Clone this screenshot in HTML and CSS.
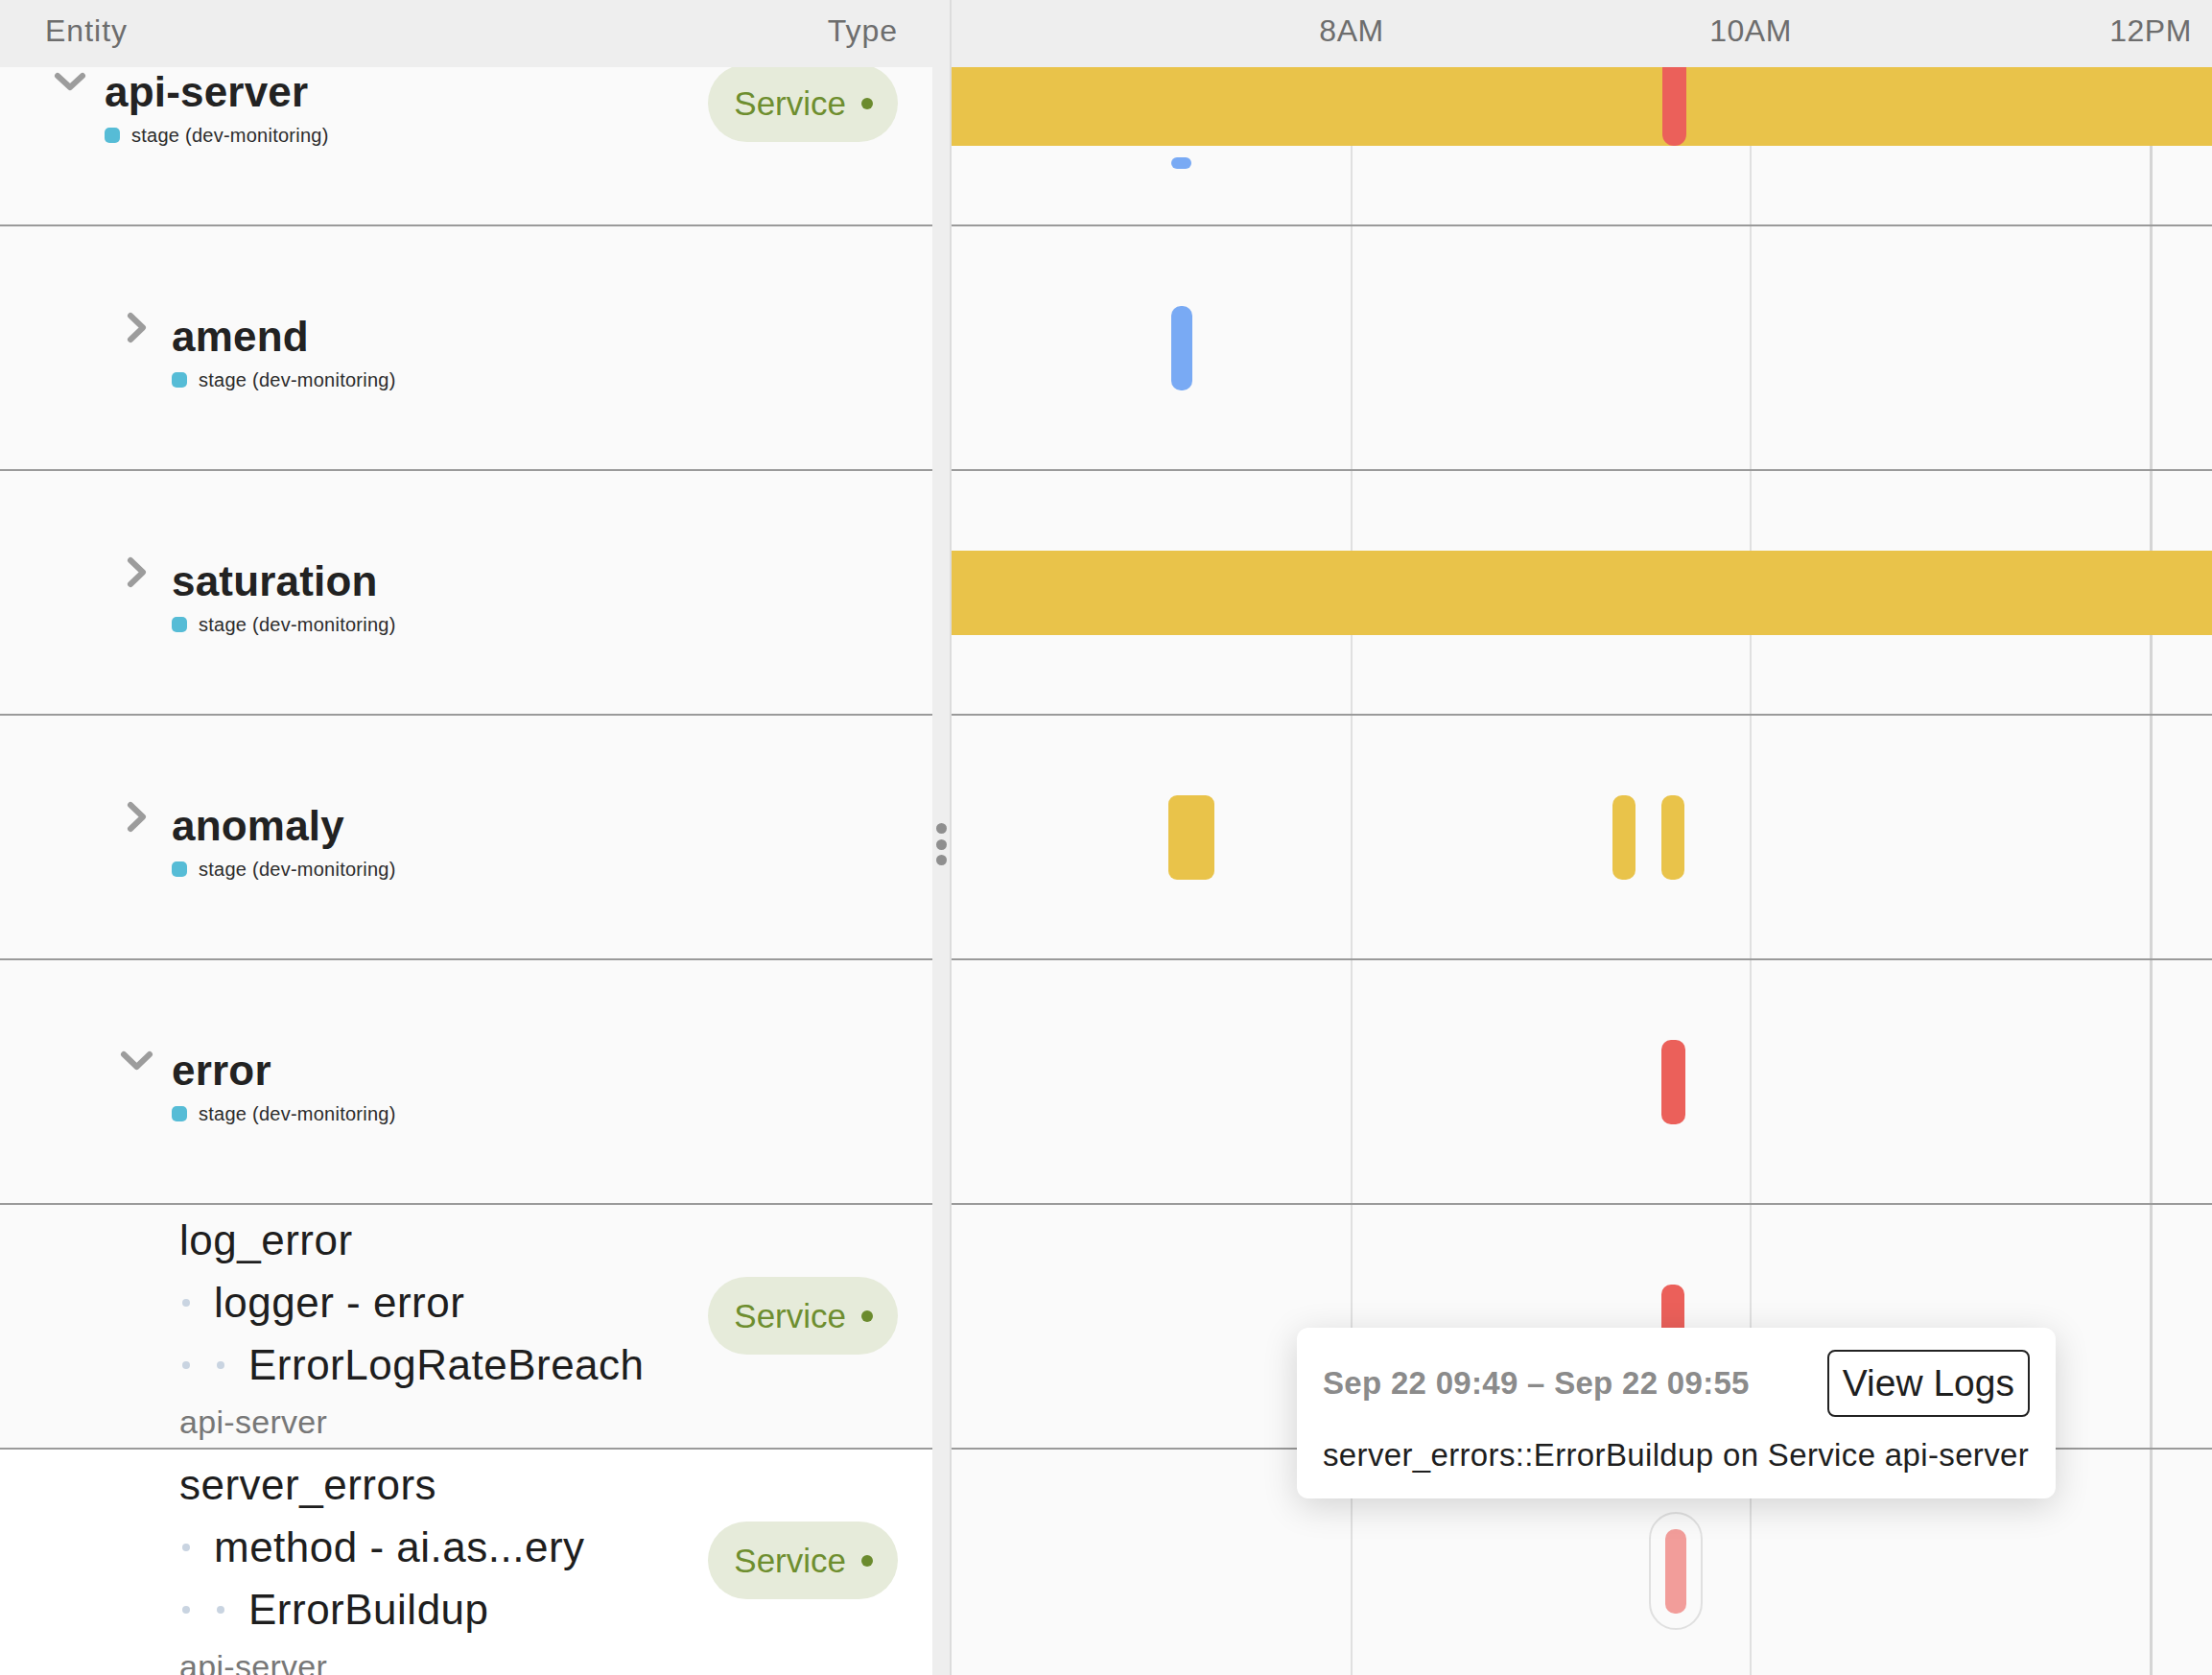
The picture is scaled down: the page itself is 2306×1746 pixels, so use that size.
FILE: index.html
```html
<!DOCTYPE html>
<html lang="en">
<head>
<meta charset="utf-8">
<title>Entity timeline</title>
<link rel="stylesheet" href="styles.css">
</head>
<body>
<div class="app">
  <section class="entities">
    <header class="col-head"><span>Entity</span><span>Type</span></header>
    <div class="viewport">
      <div class="rows">
        <div class="row group lvl0">
          <div class="row-main">
            <svg class="chev" viewBox="0 0 40 40"><path d="M7 12 L20 24 L33 12"/></svg>
            <div class="ent">
              <div class="ent-name">api-server</div>
              <div class="tag"><span class="sq"></span>stage (dev-monitoring)</div>
            </div>
          </div>
          <span class="pill">Service</span>
        </div>
        <div class="row group lvl1">
          <div class="row-main">
            <svg class="chev" viewBox="0 0 40 40"><path d="M13 7 L26 19.5 L13 32"/></svg>
            <div class="ent">
              <div class="ent-name">amend</div>
              <div class="tag"><span class="sq"></span>stage (dev-monitoring)</div>
            </div>
          </div>
        </div>
        <div class="row group lvl1">
          <div class="row-main">
            <svg class="chev" viewBox="0 0 40 40"><path d="M13 7 L26 19.5 L13 32"/></svg>
            <div class="ent">
              <div class="ent-name">saturation</div>
              <div class="tag"><span class="sq"></span>stage (dev-monitoring)</div>
            </div>
          </div>
        </div>
        <div class="row group lvl1">
          <div class="row-main">
            <svg class="chev" viewBox="0 0 40 40"><path d="M13 7 L26 19.5 L13 32"/></svg>
            <div class="ent">
              <div class="ent-name">anomaly</div>
              <div class="tag"><span class="sq"></span>stage (dev-monitoring)</div>
            </div>
          </div>
        </div>
        <div class="row group lvl1">
          <div class="row-main">
            <svg class="chev" viewBox="0 0 40 40"><path d="M6 12 L19.5 25 L33 12"/></svg>
            <div class="ent">
              <div class="ent-name">error</div>
              <div class="tag"><span class="sq"></span>stage (dev-monitoring)</div>
            </div>
          </div>
        </div>
        <div class="row leaf">
          <div class="leaf-text">
            <div class="l1">log_error</div>
            <div class="l2"><i class="b"></i>logger - error</div>
            <div class="l2"><i class="b"></i><i class="b"></i>ErrorLogRateBreach</div>
            <div class="l3">api-server</div>
          </div>
          <span class="pill">Service</span>
        </div>
        <div class="row leaf white">
          <div class="leaf-text">
            <div class="l1">server_errors</div>
            <div class="l2"><i class="b"></i>method - ai.as...ery</div>
            <div class="l2"><i class="b"></i><i class="b"></i>ErrorBuildup</div>
            <div class="l3">api-server</div>
          </div>
          <span class="pill">Service</span>
        </div>
      </div>
    </div>
  </section>

  <div class="splitter"><i></i><i></i><i></i></div>

  <section class="timeline">
    <header class="axis">
      <span class="tick" style="left:417px">8AM</span>
      <span class="tick" style="left:833px">10AM</span>
      <span class="tick" style="left:1250px">12PM</span>
    </header>
    <div class="viewport">
      <i class="gridline" style="left:416px"></i>
      <i class="gridline" style="left:832px"></i>
      <i class="gridline strong" style="left:1249px"></i>
      <div class="rows">
        <div class="track">
          <span class="bar yellow full"></span>
          <span class="bar red cut" style="left:741px;width:25px"></span>
          <span class="bar blue mini" style="left:229px;width:21px"></span>
        </div>
        <div class="track">
          <span class="bar blue" style="left:229px;width:22px"></span>
        </div>
        <div class="track">
          <span class="bar yellow full"></span>
        </div>
        <div class="track">
          <span class="bar yellow wide" style="left:226px;width:48px"></span>
          <span class="bar yellow" style="left:689px;width:24px"></span>
          <span class="bar yellow" style="left:740px;width:24px"></span>
        </div>
        <div class="track">
          <span class="bar red" style="left:740px;width:25px"></span>
        </div>
        <div class="track">
          <span class="bar red" style="left:740px;width:24px"></span>
        </div>
        <div class="track">
          <span class="ring" style="left:727px;width:56px"></span>
          <span class="bar pale" style="left:744px;width:22px"></span>
        </div>
      </div>
    </div>

    <div class="tooltip">
      <div class="tip-head">
        <span class="tip-date">Sep 22 09:49 – Sep 22 09:55</span>
        <button class="tip-btn" type="button">View Logs</button>
      </div>
      <div class="tip-body">server_errors::ErrorBuildup on Service api-server</div>
    </div>
  </section>
</div>
</body>
</html>
```

FILE: styles.css
```css
* { box-sizing: border-box; margin: 0; padding: 0; }

body {
  margin: 0;
  background: #fafafa;
  font-family: "Liberation Sans", Arial, sans-serif;
  color: #222;
  overflow: hidden;
}

.app {
  display: grid;
  grid-template-columns: 972px 20px 1fr;
  width: 2306px;
  height: 1746px;
}

.entities,
.timeline {
  display: flex;
  flex-direction: column;
  min-width: 0;
  overflow: hidden;
}

.timeline { position: relative; }

.col-head {
  flex: none;
  height: 70px;
  background: #eeeeee;
  display: flex;
  justify-content: space-between;
  padding: 0 36px 0 47px;
  font-size: 32px;
  line-height: 64px;
  letter-spacing: 1px;
  color: #6d6d6d;
}

.viewport {
  flex: 1;
  overflow: hidden;
  position: relative;
}

.rows { margin-top: -89px; }

/* entity rows */
.row {
  height: 255px;
  border-bottom: 2px solid #9a9a9a;
  display: flex;
  justify-content: space-between;
  align-items: flex-start;
}

.row.white { background: #ffffff; }

.lvl0 { padding-left: 53px; }
.lvl1 { padding-left: 123px; }

.row-main {
  display: flex;
  align-items: flex-start;
  gap: 16px;
  padding-top: 86px;
}

.chev {
  width: 40px;
  height: 40px;
  flex: none;
  fill: none;
  stroke: #9c9c9c;
  stroke-width: 6;
  stroke-linecap: round;
  stroke-linejoin: round;
}

.ent-name {
  font-size: 44px;
  font-weight: 700;
  line-height: 57px;
  letter-spacing: 0.2px;
  color: #222;
  white-space: nowrap;
}

.tag {
  margin-top: 5px;
  display: flex;
  align-items: center;
  gap: 12px;
  font-size: 20px;
  line-height: 24px;
  letter-spacing: 0.25px;
  color: #2c2c2c;
  white-space: nowrap;
}

.sq {
  width: 16px;
  height: 16px;
  border-radius: 5px;
  background: #56bcd6;
  flex: none;
}

.pill {
  flex: none;
  height: 81px;
  display: inline-flex;
  align-items: center;
  gap: 16px;
  padding: 0 26px 0 27px;
  margin-right: 36px;
  border-radius: 41px;
  background: #e6ebda;
  color: #6e8e2f;
  font-size: 35px;
}

.pill::after {
  content: "";
  width: 12px;
  height: 12px;
  border-radius: 50%;
  background: #6b8b2e;
}

.group .pill { align-self: center; }
.leaf .pill { margin-top: 75px; }

/* leaf rows */
.leaf { padding-left: 187px; }

.leaf-text { padding-top: 4px; }

.l1,
.l2 {
  font-size: 44px;
  line-height: 65px;
  letter-spacing: 0.5px;
  color: #1e1e1e;
  white-space: nowrap;
}

.l2 {
  display: flex;
  align-items: center;
}

.b {
  width: 36px;
  flex: none;
  display: flex;
}

.b::before {
  content: "";
  width: 8px;
  height: 8px;
  margin-left: 3px;
  border-radius: 50%;
  background: #c9d4e1;
}

.l3 {
  font-size: 34px;
  line-height: 54px;
  letter-spacing: 0.3px;
  color: #777777;
  white-space: nowrap;
}

/* splitter */
.splitter {
  background: #eeeeee;
  border-right: 2px solid #dcdcdc;
  display: flex;
  flex-direction: column;
  align-items: center;
  justify-content: center;
  gap: 5.5px;
  padding-top: 14px;
}

.splitter i {
  width: 11px;
  height: 11px;
  border-radius: 50%;
  background: #8f8f8f;
}

/* timeline */
.axis {
  flex: none;
  height: 70px;
  position: relative;
  background: #eeeeee;
  font-size: 32px;
  line-height: 64px;
  letter-spacing: 0.5px;
  color: #6d6d6d;
}

.tick {
  position: absolute;
  top: 0;
  transform: translateX(-50%);
  white-space: nowrap;
}

.gridline {
  position: absolute;
  top: 0;
  bottom: 0;
  width: 2px;
  background: #e0e0e0;
}

.gridline.strong {
  width: 3px;
  background: #d5d5d5;
}

.track {
  height: 255px;
  border-bottom: 2px solid #9a9a9a;
  position: relative;
}

.bar {
  position: absolute;
  top: 83px;
  height: 88px;
  border-radius: 10px;
}

.bar.full {
  left: 0;
  right: 0;
  border-radius: 0;
}

.bar.wide { border-radius: 9px; }

.yellow { background: #e9c34a; }
.red { background: #eb605a; }
.blue { background: #79aaf4; }
.pale { background: #f29d9a; }

.bar.cut { border-radius: 0 0 12px 12px; }

.bar.mini {
  top: 183px;
  height: 12px;
  border-radius: 6px;
}

.ring {
  position: absolute;
  top: 65px;
  height: 123px;
  border: 2px solid #e0e0e0;
  border-radius: 28px;
}

/* tooltip */
.tooltip {
  position: absolute;
  left: 360px;
  top: 1384px;
  width: 791px;
  padding: 23px 27px 25px 27px;
  background: #ffffff;
  border-radius: 12px;
  box-shadow: 0 8px 36px rgba(0, 0, 0, 0.16);
  z-index: 5;
}

.tip-head {
  display: flex;
  justify-content: space-between;
  align-items: center;
}

.tip-date {
  font-size: 33px;
  font-weight: 700;
  letter-spacing: 0.3px;
  color: #8b8b8b;
  white-space: nowrap;
}

.tip-btn {
  height: 70px;
  padding: 0 14px;
  border: 2px solid #222;
  border-radius: 8px;
  background: #ffffff;
  font-family: "Liberation Sans", Arial, sans-serif;
  font-size: 39px;
  line-height: 66px;
  color: #1e1e1e;
}

.tip-body {
  margin-top: 20px;
  font-size: 33px;
  line-height: 40px;
  letter-spacing: 0.35px;
  color: #1e1e1e;
  white-space: nowrap;
}
```
